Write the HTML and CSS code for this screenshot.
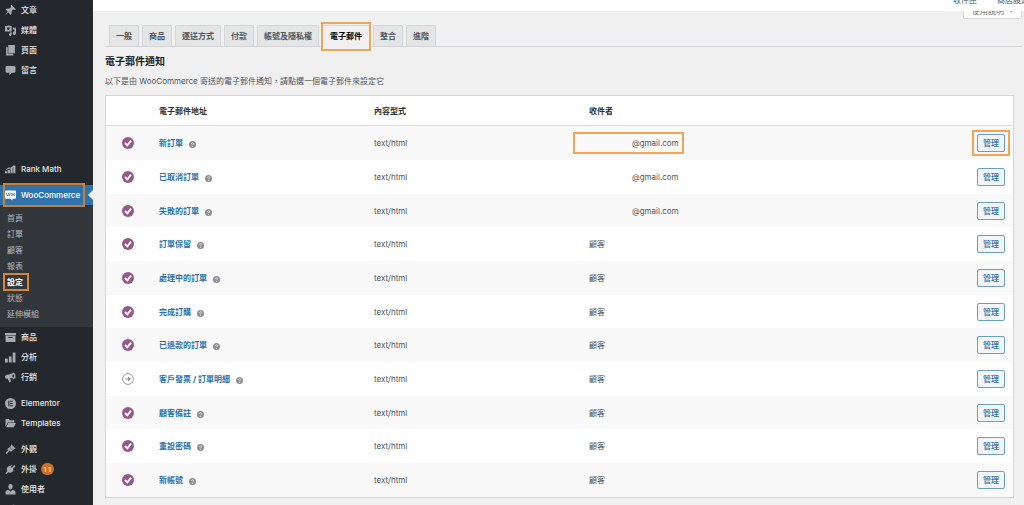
FILE: index.html
```
<!DOCTYPE html>
<html lang="zh-TW">
<head>
  <meta charset="UTF-8">
  <meta name="viewport" content="width=device-width, initial-scale=1">
  <title>WooCommerce 設定</title>
  <link rel="stylesheet" href="styles.css">
</head>
<body>
  <!-- icons -->
  <svg class="sprite" aria-hidden="true">
    <symbol id="i-pin" viewBox="0 0 20 20"><path d="M12 0l8 8-3 1-2-1-3 3c1 3 0 5-2 7l-4-5-6 6 5-7-4-4c2-2 4-2 6-1l4-3-1-3z"/></symbol>
    <symbol id="i-media" viewBox="0 0 20 20"><path fill-rule="evenodd" d="M2 2h2l1-1h3l1 1h3v10H0V2zM6 4a2.500 2.500 0 100 5 2.500 2.500 0 000-5zM14 5h6v10a3 3 0 11-3-3V8h-3zM9 13h3v4a2.500 2.500 0 11-3-2z"/></symbol>
    <symbol id="i-page" viewBox="0 0 20 20"><path d="M6 0h12v15H6zM2 4h3v12h10v3H2z"/></symbol>
    <symbol id="i-comment" viewBox="0 0 20 20"><path d="M3 2h14a2 2 0 012 2v8a2 2 0 01-2 2h-5l-4 5v-5H3a2 2 0 01-2-2V4a2 2 0 012-2z"/></symbol>
    <symbol id="i-rank" viewBox="0 0 20 20"><path d="M0 13h4v4H0zM5 11h4v6H5zM10 8h4v9h-4zM15 3h4v14h-4zM0 12l7-6 3 1 8-6-5 8-4-1z"/></symbol>
    <symbol id="i-woo" viewBox="0 0 24 22"><path d="M2 0h20a2 2 0 012 2v14a2 2 0 01-2 2h-6l1 4-6-4H2a2 2 0 01-2-2V2a2 2 0 012-2z"/><path d="M3 6l2 6 3-6 1 6 3-7M15 6a1.500 3 0 100 6 1.500 3 0 000-6zM20 6a1.500 3 0 100 6 1.500 3 0 000-6z" fill="none" stroke="#2e72ae" stroke-width="1.500"/></symbol>
    <symbol id="i-product" viewBox="0 0 20 20"><path fill-rule="evenodd" d="M0 2h20v4H0zM1 7h18v11H1zM6 9v2h8V9z"/></symbol>
    <symbol id="i-chart" viewBox="0 0 20 20"><path d="M0 12h5v7H0zM7 8h5v11H7zM14 1h5v18h-5z"/></symbol>
    <symbol id="i-megaphone" viewBox="0 0 20 20"><path fill-rule="evenodd" d="M15 1c3 1 5 5 4 9-1 3-3 3-5 2l-5-1 2 6-3 2-3-7c-3 1-5-1-5-3s2-4 4-4c4 0 7-1 11-4zm0 3c-2 1-3 5 0 6 2-1 3-4 0-6z"/></symbol>
    <symbol id="i-elementor" viewBox="0 0 20 20"><path fill-rule="evenodd" d="M10 0a10 10 0 100 20 10 10 0 000-20zM6 5h2v10H6zM9 5h5v2H9zM9 9h5v2H9zM9 13h5v2H9z"/></symbol>
    <symbol id="i-folder" viewBox="0 0 20 20"><path d="M1 2h6l2 2h8v4H5l-3 6-1 1zM6 9h14l-4 8H2z"/></symbol>
    <symbol id="i-brush" viewBox="0 0 20 20"><path d="M12 1l7 7-5 3-5-5zM8 6l6 6-3 2-3-2-5 6-2-2 5-5-2-2z"/></symbol>
    <symbol id="i-plug" viewBox="0 0 20 20"><path d="M12 7l5-5 2 2-5 5 2 2c-2 4-6 6-10 4l-3 3-2-1 3-4C2 9 4 5 8 3l1 1 3-3 1 1-3 4z"/></symbol>
    <symbol id="i-user" viewBox="0 0 20 20"><path d="M10 0a4 4 0 014 4c0 3-2 6-4 6S6 7 6 4a4 4 0 014-4zM1 19v-5c0-2 3-3 6-3l3 3 3-3c3 0 6 1 6 3v5z"/></symbol>
    <symbol id="i-tool" viewBox="0 0 20 20"><path d="M14 6l4-4c2 4 0 8-5 8l-8 9-4-3 9-8c0-5 4-8 8-6l-4 4z"/></symbol>
    <symbol id="i-on" viewBox="0 0 20 20"><circle cx="10" cy="10" r="10" fill="#96588a"/><path d="M5 10l4 4 6-8" fill="none" stroke="#fff" stroke-width="3"/></symbol>
    <symbol id="i-manual" viewBox="0 0 20 20"><circle cx="10" cy="10" r="9" fill="none" stroke="#8c8f94" stroke-width="1.500"/><path d="M5 9h5V6l5 4-5 4v-3H5z" fill="#8c8f94"/></symbol>
    <symbol id="i-help" viewBox="0 0 20 20"><circle cx="10" cy="10" r="10" fill="#8c8f94"/><path d="M7 8c0-4 7-4 6 0 0 2-3 2-3 4M10 14v3" fill="none" stroke="#fff" stroke-width="2"/></symbol>
  </svg>

  <div class="admin">
    <nav class="sidebar">
      <ul class="menu">
        <li><a href="#"><svg><use href="#i-pin"/></svg>文章</a></li>
        <li><a href="#"><svg><use href="#i-media"/></svg>媒體</a></li>
        <li><a href="#"><svg><use href="#i-page"/></svg>頁面</a></li>
        <li><a href="#"><svg><use href="#i-comment"/></svg>留言</a></li>
      </ul>
      <ul class="menu menu-plugins">
        <li><a href="#"><svg><use href="#i-rank"/></svg>Rank Math</a></li>
        <li class="current gap">
          <a href="#" class="marked"><svg class="woo"><use href="#i-woo"/></svg>WooCommerce</a>
          <ul class="submenu">
            <li><a href="#">首頁</a></li>
            <li><a href="#">訂單</a></li>
            <li><a href="#">顧客</a></li>
            <li><a href="#">報表</a></li>
            <li><a href="#" class="marked active">設定</a></li>
            <li><a href="#">狀態</a></li>
            <li><a href="#">延伸模組</a></li>
          </ul>
        </li>
        <li><a href="#"><svg><use href="#i-product"/></svg>商品</a></li>
        <li><a href="#"><svg><use href="#i-chart"/></svg>分析</a></li>
        <li><a href="#"><svg><use href="#i-megaphone"/></svg>行銷</a></li>
        <li class="gap"><a href="#"><svg><use href="#i-elementor"/></svg>Elementor</a></li>
        <li><a href="#"><svg><use href="#i-folder"/></svg>Templates</a></li>
        <li class="gap"><a href="#"><svg><use href="#i-brush"/></svg>外觀</a></li>
        <li><a href="#"><svg><use href="#i-plug"/></svg>外掛 <span class="count">11</span></a></li>
        <li><a href="#"><svg><use href="#i-user"/></svg>使用者</a></li>
        <li><a href="#" aria-label="工具"><svg><use href="#i-tool"/></svg></a></li>
      </ul>
    </nav>

    <div class="content">
      <header class="topbar">
        <a href="#">收件匣</a>
        <a href="#">商店設定</a>
      </header>
      <div class="screen-links">
        <button type="button">使用說明 <span class="caret"></span></button>
      </div>

      <main>
        <nav class="tabs">
          <a href="#">一般</a>
          <a href="#">商品</a>
          <a href="#">運送方式</a>
          <a href="#">付款</a>
          <a href="#">帳號及隱私權</a>
          <a href="#" class="active marked">電子郵件</a>
          <a href="#">整合</a>
          <a href="#">進階</a>
        </nav>

        <h2>電子郵件通知</h2>
        <p>以下是由 WooCommerce 寄送的電子郵件通知，請點選一個電子郵件來設定它</p>

        <table class="emails">
          <thead>
            <tr>
              <th class="col-status"></th>
              <th class="col-name">電子郵件地址</th>
              <th class="col-type">內容型式</th>
              <th>收件者</th>
              <th class="col-action"></th>
            </tr>
          </thead>
          <tbody>
            <tr>
              <td><svg class="status"><use href="#i-on"/></svg></td>
              <td><a href="#">新訂單</a><svg class="help"><use href="#i-help"/></svg></td>
              <td>text/html</td>
              <td><span class="address marked">@gmail.com</span></td>
              <td><span class="marked"><button type="button">管理</button></span></td>
            </tr>
            <tr>
              <td><svg class="status"><use href="#i-on"/></svg></td>
              <td><a href="#">已取消訂單</a><svg class="help"><use href="#i-help"/></svg></td>
              <td>text/html</td>
              <td><span class="address">@gmail.com</span></td>
              <td><button type="button">管理</button></td>
            </tr>
            <tr>
              <td><svg class="status"><use href="#i-on"/></svg></td>
              <td><a href="#">失敗的訂單</a><svg class="help"><use href="#i-help"/></svg></td>
              <td>text/html</td>
              <td><span class="address">@gmail.com</span></td>
              <td><button type="button">管理</button></td>
            </tr>
            <tr>
              <td><svg class="status"><use href="#i-on"/></svg></td>
              <td><a href="#">訂單保留</a><svg class="help"><use href="#i-help"/></svg></td>
              <td>text/html</td>
              <td>顧客</td>
              <td><button type="button">管理</button></td>
            </tr>
            <tr>
              <td><svg class="status"><use href="#i-on"/></svg></td>
              <td><a href="#">處理中的訂單</a><svg class="help"><use href="#i-help"/></svg></td>
              <td>text/html</td>
              <td>顧客</td>
              <td><button type="button">管理</button></td>
            </tr>
            <tr>
              <td><svg class="status"><use href="#i-on"/></svg></td>
              <td><a href="#">完成訂購</a><svg class="help"><use href="#i-help"/></svg></td>
              <td>text/html</td>
              <td>顧客</td>
              <td><button type="button">管理</button></td>
            </tr>
            <tr>
              <td><svg class="status"><use href="#i-on"/></svg></td>
              <td><a href="#">已退款的訂單</a><svg class="help"><use href="#i-help"/></svg></td>
              <td>text/html</td>
              <td>顧客</td>
              <td><button type="button">管理</button></td>
            </tr>
            <tr>
              <td><svg class="status"><use href="#i-manual"/></svg></td>
              <td><a href="#">客戶發票 / 訂單明細</a><svg class="help"><use href="#i-help"/></svg></td>
              <td>text/html</td>
              <td>顧客</td>
              <td><button type="button">管理</button></td>
            </tr>
            <tr>
              <td><svg class="status"><use href="#i-on"/></svg></td>
              <td><a href="#">顧客備註</a><svg class="help"><use href="#i-help"/></svg></td>
              <td>text/html</td>
              <td>顧客</td>
              <td><button type="button">管理</button></td>
            </tr>
            <tr>
              <td><svg class="status"><use href="#i-on"/></svg></td>
              <td><a href="#">重設密碼</a><svg class="help"><use href="#i-help"/></svg></td>
              <td>text/html</td>
              <td>顧客</td>
              <td><button type="button">管理</button></td>
            </tr>
            <tr>
              <td><svg class="status"><use href="#i-on"/></svg></td>
              <td><a href="#">新帳號</a><svg class="help"><use href="#i-help"/></svg></td>
              <td>text/html</td>
              <td>顧客</td>
              <td><button type="button">管理</button></td>
            </tr>
          </tbody>
        </table>
      </main>
    </div>
  </div>
</body>
</html>
```
FILE: styles.css
```
* {
  box-sizing: border-box;
}

body {
  margin: 0;
  font-family: Inter, "Noto Sans CJK TC", sans-serif;
  font-size: 8px;
  line-height: 12px;
  color: #50575e;
  background: #f0f0f1;
}

a {
  text-decoration: none;
}

ul {
  margin: 0;
  padding: 0;
  list-style: none;
}

.sprite {
  display: none;
}

.admin {
  display: flex;
  height: 100vh;
  overflow: hidden;
}

/* orange frames */
.marked {
  position: relative;
}

.marked::after {
  content: "";
  position: absolute;
  border: 2px solid #f2a556;
  pointer-events: none;
}

/* sidebar */
.sidebar {
  flex: 0 0 93px;
  background: #23282d;
}

.menu > li > a {
  display: flex;
  align-items: center;
  height: 20px;
  padding-left: 5px;
  gap: 5px;
  color: #e6e7e8;
  font-weight: 500;
}

.menu svg {
  width: 11px;
  height: 11px;
  fill: #a7aaad;
}

.menu .gap {
  margin-top: 6px;
}

.menu-plugins {
  margin-top: 79px;
}

.menu .current > a {
  background: #2e72ae;
  color: #fff;
}

.menu svg.woo {
  fill: #fff;
}

.current > a::before {
  content: "";
  position: absolute;
  right: 0;
  top: 5px;
  border: 5px solid transparent;
  border-left: 0;
  border-right-color: #f0f0f1;
}

.current > a::after {
  inset: -2px 8px -2px 3px;
  border-color: #c97f36;
}

.submenu {
  padding: 5px 0;
  background: #32373c;
}

.submenu a {
  display: inline-block;
  padding-left: 7px;
  line-height: 16px;
  color: #b4b9be;
  vertical-align: top;
}

.submenu li {
  height: 16px;
}

.submenu .active {
  color: #fff;
  font-weight: 700;
}

.submenu .active::after {
  inset: -1px -6px -1px 3px;
  border-color: #d98632;
}

.count {
  min-width: 13px;
  margin-left: -1px;
  border-radius: 6px;
  background: #ca6f2a;
  color: #fff;
  font-family: "Open Sans", sans-serif;
  text-align: center;
}

/* top */
.content {
  flex: 1;
  min-width: 0;
}

.topbar {
  position: relative;
  z-index: 1;
  display: flex;
  align-items: center;
  justify-content: flex-end;
  gap: 20px;
  height: 22px;
  margin-top: -11px;
  margin-right: -5px;
  background: #fff;
}

.topbar a {
  color: #50575e;
}

.screen-links {
  display: flex;
  justify-content: flex-end;
  height: 8px;
  margin: 0 2px 6px;
}

.screen-links button {
  display: flex;
  align-items: center;
  gap: 5px;
  height: 16px;
  margin-top: -8px;
  padding: 0 8px;
  border: 1px solid #dcdcde;
  border-radius: 0 0 2px 2px;
  background: #fff;
  color: #646970;
  font: inherit;
}

.caret {
  border: 2px solid transparent;
  border-top-color: #646970;
  border-bottom: 0;
}

main {
  padding: 0 10px 7px 12px;
}

/* tabs */
.tabs {
  display: flex;
  gap: 3px;
  margin-right: -8px;
  padding-left: 4px;
  border-bottom: 1px solid #d5d6d9;
}

.tabs a {
  padding: 4px 6px;
  border: 1px solid #d5d6d9;
  border-bottom: 0;
  background: #e4e5e5;
  color: #50575e;
  font-weight: 600;
}

.tabs .active {
  margin-bottom: -1px;
  padding: 4px 7px 5px;
  background: #f0f0f1;
  color: #000;
}

.tabs .active::after {
  inset: -4px -2px;
}

h2 {
  margin: 7px 0;
  font-size: 10px;
  line-height: 14px;
  color: #1d2327;
}

p {
  margin: 0 0 8px;
}

/* email list */
.emails {
  width: 100%;
  table-layout: fixed;
  border-collapse: separate;
  border-spacing: 0;
  border: 1px solid #d5d6d9;
  background: #fff;
}

.emails th {
  height: 30px;
  padding: 0 10px;
  border-bottom: 1px solid #dcdcde;
  color: #2c3338;
  font-weight: 600;
  text-align: left;
}

.col-status {
  width: 43px;
}

.col-name,
.col-type {
  width: 23.7%;
}

.emails td {
  height: 34px;
  padding: 0 10px;
}

.emails tr:nth-child(3n) td {
  height: 33px;
}

.emails tbody tr:nth-child(odd) {
  background: #f9f9f9;
}

.emails td:first-child {
  padding: 0 0 0 16px;
}

.emails td:last-child {
  padding: 0 8px 0 0;
  text-align: right;
}

.emails td a {
  color: #2b73ad;
  font-weight: 700;
}

.status {
  display: block;
  width: 12px;
  height: 12px;
}

.help {
  width: 7px;
  height: 7px;
  margin-left: 6px;
  vertical-align: -2px;
}

.address {
  display: inline-block;
  padding-left: 43px;
}

.address.marked::after {
  inset: -5px -5px -5px -16px;
}

.emails td:last-child .marked {
  display: inline-block;
}

.emails td:last-child .marked::after {
  inset: -4px -5px;
}

.emails button {
  display: block;
  height: 18px;
  margin-left: auto;
  padding: 0 5px;
  border: 1px solid #6b9fc8;
  border-radius: 2px;
  background: #f3f5f6;
  color: #2b73ad;
  font: inherit;
  font-weight: 500;
}
```
